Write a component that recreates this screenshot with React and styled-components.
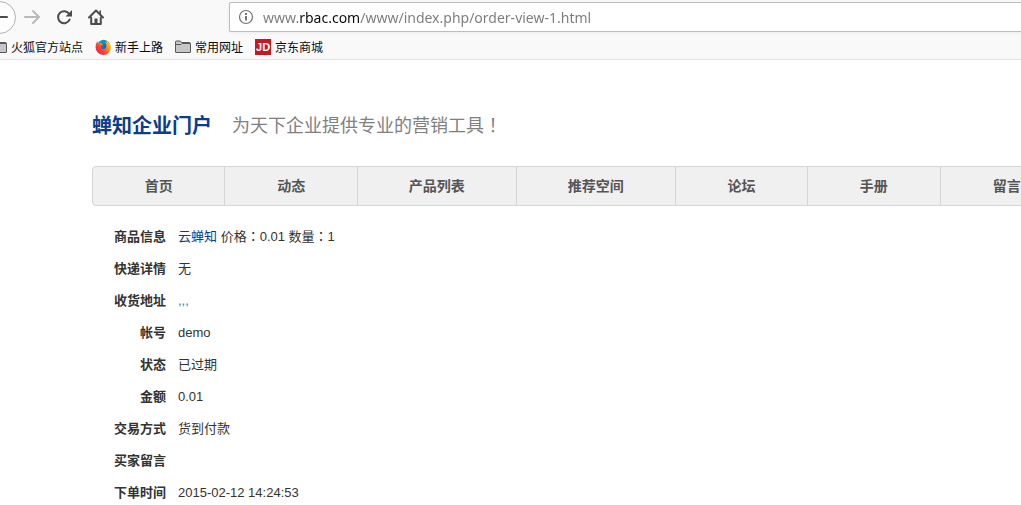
import React from 'react'
import styled, {createGlobalStyle} from 'styled-components'

const GlobalStyle = createGlobalStyle`
    * {
        box-sizing: border-box;
    }
    body {
        margin: 0;
        overflow: hidden;
        background: white;
        color: #333;
        font-family: "Liberation Sans", "Noto Sans CJK SC", sans-serif;
        font-size: 13px;
    }
    a {
        text-decoration: none;
    }
`

const Chrome = styled.header`
    background: #f9f9fa;
    border-bottom: 1px solid #e1e1e2;
    overflow: hidden;
`

const Toolbar = styled.div`
    display: flex;
    align-items: center;
    height: 34px;
    margin-left: -17px;
`

const Tools = styled.div`
    display: flex;
    gap: 16px;
    padding: 0 125px 0 9px;
`

const IconButton = styled.button`
    display: flex;
    padding: 0;
    border: 0;
    background: none;
    color: ${({$dim}) => ($dim ? '#b9b9ba' : '#4c4c4f')};
`

const BackButton = styled(IconButton)`
    align-items: center;
    justify-content: center;
    width: 33px;
    height: 33px;
    margin-right: -1px;
    border: 1px solid #b1b1b1;
    border-radius: 50%;
    background: #fdfdfd;
`

const UrlBar = styled.label`
    display: flex;
    flex: 1;
    align-items: center;
    gap: 9px;
    height: 30px;
    padding-left: 8px;
    border: 1px solid #bdbdbe;
    border-right: 0;
    border-radius: 2px 0 0 2px;
    background: white;
    box-shadow: 0 1px 3px rgba(0, 0, 0, 0.06);
    color: #737373;
`

/* the host name is darker than the rest of the address */
const UrlInput = styled.input`
    flex: 1;
    min-width: 0;
    height: 28px;
    padding: 0;
    border: 0;
    outline: 0;
    font-family: "Noto Sans", sans-serif;
    font-size: 14px;
    color: transparent;
    background: linear-gradient(to right, #7a7a7a 36px, #0c0c0d 36px, #0c0c0d 97px, #7a7a7a 97px);
    background-clip: text;
    -webkit-background-clip: text;
`

const Bookmarks = styled.nav`
    display: flex;
    gap: 12px;
    height: 25px;
    margin-left: -9px;
`

const Bookmark = styled.a`
    display: flex;
    align-items: center;
    gap: 4px;
    color: #0c0c0d;
    font-size: 12px;
    white-space: nowrap;
`

const Page = styled.div`
    padding: 44px 0 0 92px;
    overflow: hidden;
`

const SiteHead = styled.div`
    display: flex;
    align-items: center;
    gap: 20px;
    height: 40px;
    margin-bottom: 22px;
`

const SiteName = styled.a`
    color: #0b3d8c;
    font-size: 20px;
    font-weight: bold;
`

const Slogan = styled.span`
    color: #808080;
    font-size: 18px;
`

/* full-width punctuation centred in its cell */
const Punct = styled.span`
    font-family: "Noto Sans CJK TC", sans-serif;
    line-height: 0;
`

const Menu = styled.nav`
    display: grid;
    grid-template-columns: 5fr 5fr 6fr 6fr 5fr 5fr 5fr;
    min-width: 982px;
    height: 40px;
    border: 1px solid #d5d5d5;
    border-radius: 4px;
    background: #f0f0f0;
`

const MenuItem = styled.a`
    display: flex;
    align-items: center;
    justify-content: center;
    padding-bottom: 2px;
    border-right: 1px solid #d5d5d5;
    color: #555;
    font-size: 14px;
    font-weight: bold;
    &:last-child {
        border-right: 0;
    }
`

const Order = styled.table`
    margin-top: 15px;
    border-collapse: collapse;
    th, td {
        height: 32px;
        padding: 0 6px;
        line-height: 20px;
        white-space: nowrap;
    }
    th {
        width: 80px;
        text-align: right;
    }
`

const OrderLink = styled.a`
    color: ${({$light}) => ($light ? '#3280b4' : '#0b3d8c')};
`

const ForwardIcon = () => (
    <svg width="16" height="16" viewBox="0 0 16 16" fill="none" stroke="currentColor" strokeWidth="2" strokeLinecap="round" strokeLinejoin="round">
        <path d="M1 8h14M9 2l6 6-6 6" />
    </svg>
)

const BackIcon = () => (
    <svg width="16" height="16" viewBox="0 0 16 16" fill="none" stroke="currentColor" strokeWidth="2" strokeLinecap="round" strokeLinejoin="round">
        <path d="M15 8H1M7 2L1 8l6 6" />
    </svg>
)

const ReloadIcon = () => (
    <svg width="16" height="16" viewBox="0 0 16 16" fill="none" stroke="currentColor" strokeWidth="2">
        <path d="M13.2 5A6 6 0 1 0 13.6 10.6" strokeLinecap="round" />
        <path d="M16 1v6.5H9.5z" fill="currentColor" stroke="none" />
    </svg>
)

const HomeIcon = () => (
    <svg width="16" height="16" viewBox="0 0 16 16" fill="none" stroke="currentColor" strokeWidth="2" strokeLinecap="round" strokeLinejoin="round">
        <path d="M1 8.5L8 1.5l7 7" />
        <path d="M3.2 8.5V15h9.6V8.5" />
        <path d="M6.5 9.5h3V15h-3z" fill="currentColor" stroke="none" />
        <path d="M12.2 2v3" strokeWidth="1.6" />
    </svg>
)

const InfoIcon = () => (
    <svg width="16" height="16" viewBox="0 0 16 16" fill="none" stroke="currentColor">
        <circle cx="8" cy="8" r="6.5" strokeWidth="1.2" />
        <path d="M8 7v4.5M8 4v2" strokeWidth="2" />
    </svg>
)

const FolderIcon = () => (
    <svg width="16" height="16" viewBox="0 0 16 16" fill="#c6c6c8" stroke="#58585b">
        <path d="M.5 13V3q0-1 1-1h3.6q.6 0 1 .7l.5.8h7.9q1 0 1 1V13q0 .5-.5.5H1q-.5 0-.5-.5z" />
        <path d="M1 5.5h5l1-1h8" fill="none" />
    </svg>
)

const FirefoxIcon = () => (
    <svg width="16" height="16" viewBox="0 0 16 16">
        <defs>
            <linearGradient id="flame" x1="1" y1="0" x2="0" y2="1">
                <stop offset="0" stopColor="#ffe226" />
                <stop offset=".35" stopColor="#ff9a12" />
                <stop offset=".65" stopColor="#ff3b30" />
                <stop offset="1" stopColor="#e5127d" />
            </linearGradient>
            <linearGradient id="globe" x1="0" y1="0" x2="1" y2="1">
                <stop offset="0" stopColor="#00b7f5" />
                <stop offset="1" stopColor="#25349b" />
            </linearGradient>
        </defs>
        <circle cx="8.6" cy="7" r="6.2" fill="url(#globe)" />
        <path d="M2.2 2.2c.2 1 .7 1.600 1.500 1.900 1-.5 1.800-.4 2.500-.1L8 5.300 6 7c-.4 1.800.8 3.100 2.600 3 1.700-.1 2.900-1.300 2.800-3.300-.1-1.700-.7-2.700-1.900-3.700 1.200.1 2 .5 2.600 1.100-.2-1.400-.8-2.300-1.900-3.200 3.400 1 5.600 4 5.600 7.400A7.500 7.500 0 0 1 .6 8.500c0-2.500.5-4.500 1.600-6.300z" fill="url(#flame)" />
    </svg>
)

const JdBadge = styled.span`
    display: flex;
    align-items: center;
    justify-content: center;
    width: 16px;
    height: 16px;
    background: #c81623;
    color: white;
    font-family: "Liberation Sans", sans-serif;
    font-size: 11px;
    font-weight: bold;
`

const bookmarks = [
    {icon: <FolderIcon />, label: '火狐官方站点'},
    {icon: <FirefoxIcon />, label: '新手上路'},
    {icon: <FolderIcon />, label: '常用网址'},
    {icon: <JdBadge>JD</JdBadge>, label: '京东商城'},
]

const menu = ['首页', '动态', '产品列表', '推荐空间', '论坛', '手册', '留言']

const order = [
    ['商品信息', <><OrderLink href="#">云蝉知</OrderLink> 价格<Punct>：</Punct>0.01 数量<Punct>：</Punct>1</>],
    ['快递详情', '无'],
    ['收货地址', <OrderLink href="#" $light>,,,</OrderLink>],
    ['帐号', 'demo'],
    ['状态', '已过期'],
    ['金额', '0.01'],
    ['交易方式', '货到付款'],
    ['买家留言', ''],
    ['下单时间', '2015-02-12 14:24:53'],
]

const App = () => {
    return (
        <>
            <GlobalStyle />
            <Chrome>
                <Toolbar>
                    <BackButton aria-label="后退"><BackIcon /></BackButton>
                    <Tools>
                        <IconButton aria-label="前进" $dim><ForwardIcon /></IconButton>
                        <IconButton aria-label="刷新"><ReloadIcon /></IconButton>
                        <IconButton aria-label="主页"><HomeIcon /></IconButton>
                    </Tools>
                    <UrlBar>
                        <InfoIcon />
                        <UrlInput aria-label="地址" defaultValue="www.rbac.com/www/index.php/order-view-1.html" />
                    </UrlBar>
                </Toolbar>
                <Bookmarks>
                    {bookmarks.map(({icon, label}) => (
                        <Bookmark href="#" key={label}>{icon}{label}</Bookmark>
                    ))}
                </Bookmarks>
            </Chrome>
            <Page>
                <SiteHead>
                    <SiteName href="#">蝉知企业门户</SiteName>
                    <Slogan>为天下企业提供专业的营销工具<Punct>！</Punct></Slogan>
                </SiteHead>
                <Menu>
                    {menu.map(label => <MenuItem href="#" key={label}>{label}</MenuItem>)}
                </Menu>
                <Order>
                    <tbody>
                        {order.map(([label, value]) => (
                            <tr key={label}>
                                <th scope="row">{label}</th>
                                <td>{value}</td>
                            </tr>
                        ))}
                    </tbody>
                </Order>
            </Page>
        </>
    )
}

export default App
